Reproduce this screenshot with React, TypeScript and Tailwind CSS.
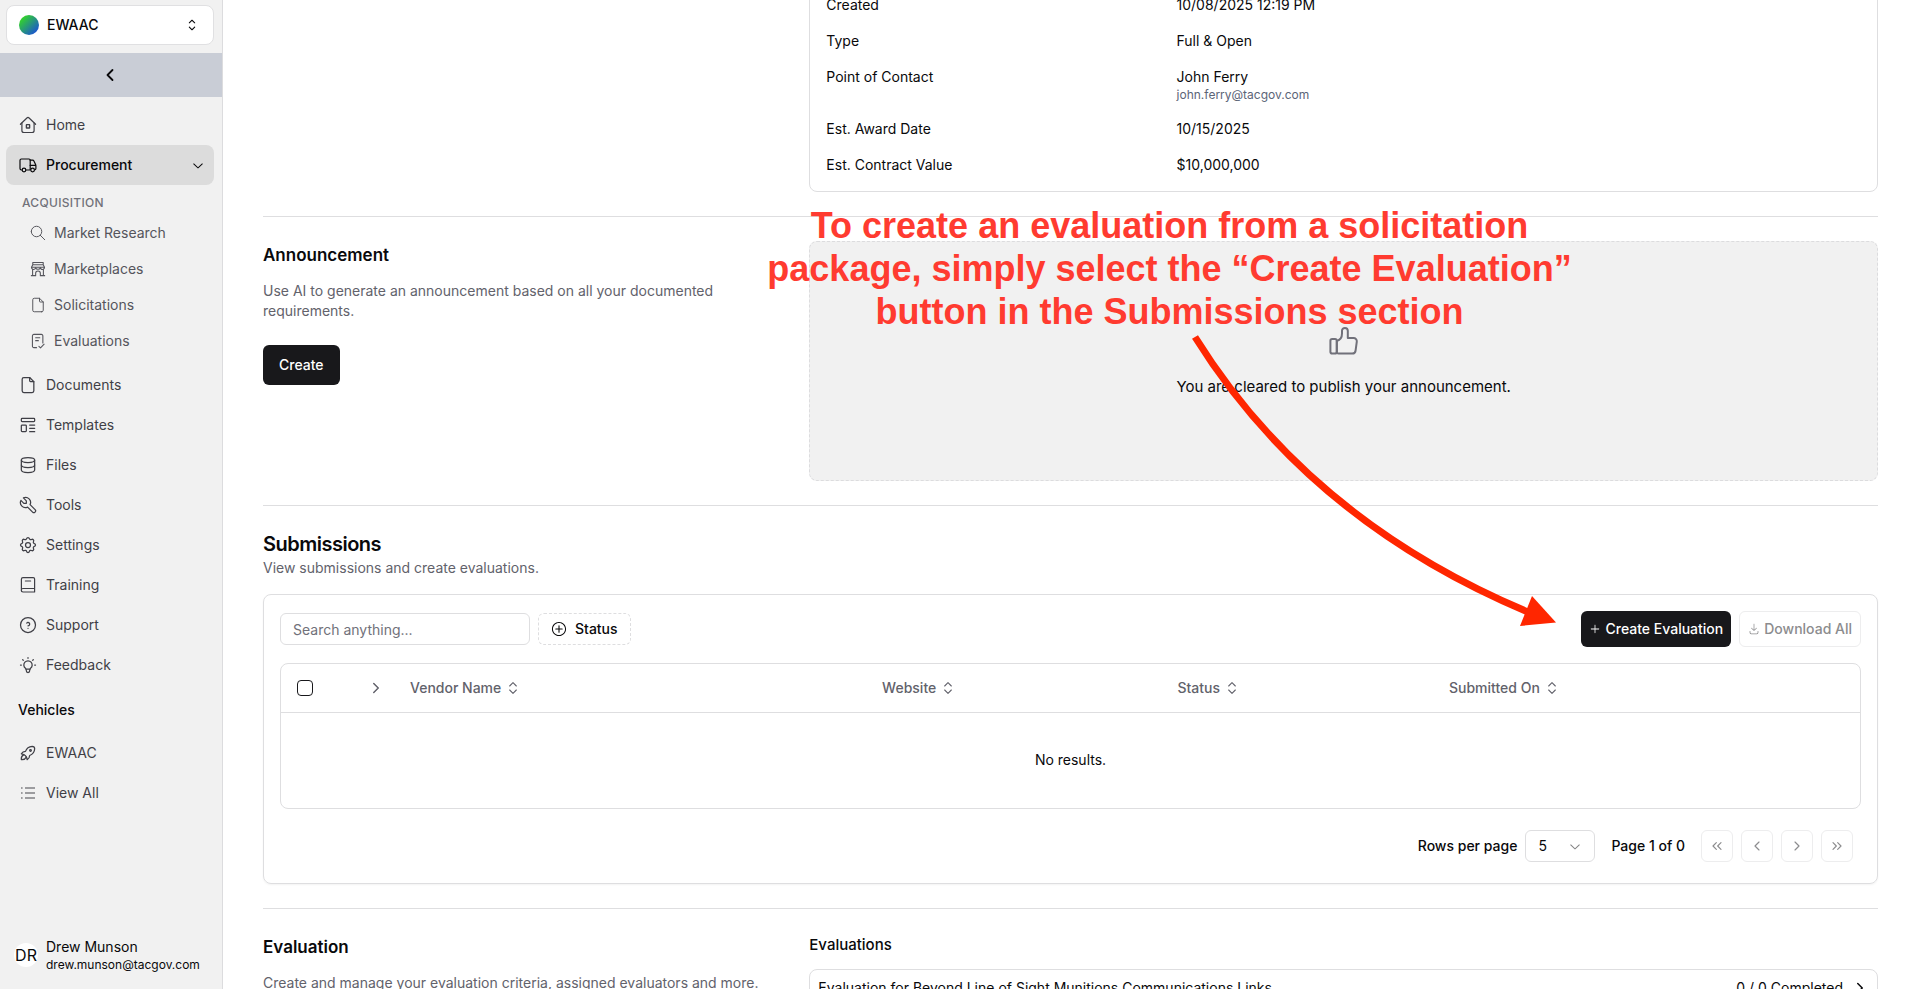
import type { ReactNode } from 'react';
import { ChevronLeft, ChevronRight, ChevronsLeft, ChevronsRight, ChevronsUpDown } from 'lucide-react';
import { RxCaretSort, RxChevronDown, RxDownload, RxPlus, RxPlusCircled } from 'react-icons/rx';
import { TbBulb, TbDatabase, TbFile, TbHelpCircle, TbRocket, TbSearch, TbSettings, TbTemplate, TbTool } from 'react-icons/tb';

const Glyph = ({ size = 20, children }: { size?: number; children: ReactNode }) => (
  <svg width={size} height={size} viewBox="0 0 20 20" fill="none" stroke="currentColor" strokeWidth="1.2" strokeLinecap="round" strokeLinejoin="round" aria-hidden="true">
    {children}
  </svg>
);

const HomeIcon = () => (
  <Glyph>
    <path d="M2.4 9.3 8.9 3a1.6 1.6 0 0 1 2.2 0l6.5 6.3" />
    <path d="M3.9 8.2v7.3a2 2 0 0 0 2 2h8.2a2 2 0 0 0 2-2V8.2" />
    <rect x="8.4" y="9.6" width="3.2" height="3.4" rx="0.3" strokeWidth="1.4" />
  </Glyph>
);

const TruckIcon = () => (
  <Glyph>
    <path d="M3.8 15h-.4A1.4 1.4 0 0 1 2 13.6V5.4A1.4 1.4 0 0 1 3.4 4H11a1.2 1.2 0 0 1 1.2 1.2V15H8" />
    <path d="M12.2 5.2h2.4a1.5 1.5 0 0 1 1.3.8l1.8 3.8a2 2 0 0 1 .2 1v2.8a1.4 1.4 0 0 1-1.2 1.4M12.2 10.4h5.4" />
    <circle cx="6" cy="15" r="1.8" />
    <circle cx="14.6" cy="15" r="1.8" />
  </Glyph>
);

const StoreIcon = () => (
  <Glyph size={18}>
    <path d="M4.2 2.8h11.6v2.4H4.2zM4.2 5.2 2.8 8M15.8 5.2 17.2 8M2.8 8h14.4" />
    <path d="M2.8 8a2.2 2.2 0 0 0 4.6.4 2.7 2.7 0 0 0 5.2 0A2.2 2.2 0 0 0 17.2 8" />
    <path d="M4 10.6v6.6M16 10.6v6.6M2.6 17.4h4.8v-2.6a2.6 2.6 0 0 1 5.2 0v2.6h4.8" />
  </Glyph>
);

const EvaluationIcon = () => (
  <Glyph size={18}>
    <path d="M8.4 17.4H5.4a1.6 1.6 0 0 1-1.6-1.6V4.2a1.6 1.6 0 0 1 1.6-1.6h8.4a1.6 1.6 0 0 1 1.6 1.6v8" />
    <path d="M7.4 6.4h4.6M7.4 9.6h3M11 16l1.8 1.6 4-4" />
  </Glyph>
);

const BookIcon = () => (
  <Glyph>
    <path d="M3.4 15.4V4.2a1.6 1.6 0 0 1 1.6-1.6h10.2a1.4 1.4 0 0 1 1.4 1.4v13H5a1.6 1.6 0 0 1 0-3.5h11.6" />
    <path d="M7.4 6h5.2" />
  </Glyph>
);

const ListIcon = () => (
  <svg width="20" height="20" viewBox="0 0 20 20" fill="none" stroke="#808084" strokeWidth="1.6" aria-hidden="true">
    <path d="M7 5h10M7 10h10M7 15h10M3 5h1.6M3 10h1.6M3 15h1.6" />
  </svg>
);

const ThumbIcon = () => (
  <svg className="size-8 text-[#71717a]" viewBox="0 0 32 32" fill="none" stroke="currentColor" strokeWidth="2" strokeLinejoin="round" aria-hidden="true">
    <rect x="2.4" y="14" width="6.4" height="14.6" rx="1.8" />
    <path d="M8.8 16c4-1 5.2-3.8 5.2-7.4V5.8a2.9 2.9 0 0 1 5.8 0V13h5.8a3.2 3.2 0 0 1 3.2 3.6l-1.2 8.8a3.4 3.4 0 0 1-3.4 3.2H10.5A1.7 1.7 0 0 1 8.8 27z" />
  </svg>
);

const ACQUISITION_LINKS = [
  { label: 'Market Research', icon: <TbSearch size={18} strokeWidth={1.3} /> },
  { label: 'Marketplaces', icon: <StoreIcon /> },
  { label: 'Solicitations', icon: <TbFile size={18} strokeWidth={1.3} /> },
  { label: 'Evaluations', icon: <EvaluationIcon /> },
];

const MAIN_LINKS = [
  { label: 'Documents', icon: <TbFile size={20} strokeWidth={1.5} /> },
  { label: 'Templates', icon: <TbTemplate size={20} strokeWidth={1.5} /> },
  { label: 'Files', icon: <TbDatabase size={20} strokeWidth={1.5} /> },
  { label: 'Tools', icon: <TbTool size={20} strokeWidth={1.5} /> },
  { label: 'Settings', icon: <TbSettings size={20} strokeWidth={1.5} /> },
  { label: 'Training', icon: <BookIcon /> },
  { label: 'Support', icon: <TbHelpCircle size={20} strokeWidth={1.5} /> },
  { label: 'Feedback', icon: <TbBulb size={20} strokeWidth={1.5} /> },
];

const DETAILS = [
  { term: 'Created', value: '10/08/2025 12:19 PM' },
  { term: 'Type', value: 'Full & Open' },
  { term: 'Point of Contact', value: 'John Ferry', email: 'john.ferry@tacgov.com' },
  { term: 'Est. Award Date', value: '10/15/2025' },
  { term: 'Est. Contract Value', value: '$10,000,000' },
];

const PAGE_BUTTONS = [
  { label: 'First page', icon: <ChevronsLeft size={16} strokeWidth={1.75} /> },
  { label: 'Previous page', icon: <ChevronLeft size={16} strokeWidth={1.75} /> },
  { label: 'Next page', icon: <ChevronRight size={16} strokeWidth={1.75} /> },
  { label: 'Last page', icon: <ChevronsRight size={16} strokeWidth={1.75} /> },
];

function NavLink({ label, icon }: { label: string; icon: ReactNode }) {
  return (
    <a href="#" className="flex h-10 items-center gap-2 rounded-lg px-3 text-[#3f3f46]">
      {icon}
      {label}
    </a>
  );
}

function Sidebar() {
  return (
    <aside className="flex w-[223px] shrink-0 flex-col border-r border-[#dcdcde] bg-[#f1f1f1]">
      <div className="pt-[5px] pr-2 pb-2 pl-[6px]">
        <button className="flex h-10 w-full items-center gap-2 rounded-lg border border-[#e0e0e2] bg-white px-3 font-medium">
          <span className="size-5 rounded-full bg-linear-to-br/srgb from-[#34dc1f] from-10% to-[#1a4fd8] to-90%" />
          EWAAC
          <RxCaretSort size={18} className="ml-auto" />
        </button>
      </div>
      <button aria-label="Collapse sidebar" className="flex h-11 items-center justify-center bg-[#c9cdd6] pr-0.5">
        <ChevronLeft size={20} strokeWidth={2.2} />
      </button>

      <nav className="flex flex-col pt-2 pr-2 pl-[6px]">
        <NavLink label="Home" icon={<HomeIcon />} />
        <button className="flex h-10 items-center gap-2 rounded-lg bg-[#dcdcdc] px-3 font-medium">
          <TruckIcon />
          Procurement
          <RxChevronDown size={16} className="ml-auto -mr-1" />
        </button>
        <div className="pt-2 pb-[6px]">
          <h2 className="px-4 pb-0.5 text-xs leading-5 font-medium tracking-wide text-[#71717a] uppercase">Acquisition</h2>
          {ACQUISITION_LINKS.map((link) => (
            <a key={link.label} href="#" className="flex h-9 items-center gap-[7px] pl-[23px] text-[#55555c]">
              {link.icon}
              {link.label}
            </a>
          ))}
        </div>
        {MAIN_LINKS.map((link) => (
          <NavLink key={link.label} label={link.label} icon={link.icon} />
        ))}
        <h2 className="px-3 pt-[15px] pb-[13px] font-medium">Vehicles</h2>
        <NavLink label="EWAAC" icon={<TbRocket size={20} strokeWidth={1.5} />} />
        <NavLink label="View All" icon={<ListIcon />} />
      </nav>

      <div className="mt-auto flex items-center gap-2 px-[14px] pb-4">
        <span className="flex size-6 items-center justify-center rounded-full bg-white text-base">DR</span>
        <div>
          <div className="leading-5">Drew Munson</div>
          <div className="text-xs">drew.munson@tacgov.com</div>
        </div>
      </div>
    </aside>
  );
}

function SortHead({ label }: { label: string }) {
  return (
    <th className="px-4 text-left font-medium">
      <button className="flex items-center gap-1">
        {label}
        <ChevronsUpDown size={16} strokeWidth={1.6} />
      </button>
    </th>
  );
}

function Submissions() {
  return (
    <section>
      <h2 className="text-xl font-semibold tracking-tight">Submissions</h2>
      <p className="text-[#62626b]">View submissions and create evaluations.</p>

      <div className="mt-4 rounded-lg border border-[#dedee0] p-4 shadow-xs">
        <div className="flex items-center gap-2">
          <input aria-label="Search submissions" placeholder="Search anything..." className="h-8 w-[250px] rounded-md border border-[#dedee0] px-3 placeholder:text-[#71717a]" />
          <button className="flex h-8 items-center gap-2 rounded-md border border-dashed border-[#dedee0] px-3 font-medium">
            <RxPlusCircled size={16} />
            Status
          </button>
          <button className="ml-auto flex h-9 items-center gap-1 rounded-md bg-[#18181b] px-2 font-medium text-white">
            <RxPlus size={12} />
            Create Evaluation
          </button>
          <button disabled className="flex h-9 items-center gap-1 rounded-md border border-[#ededee] px-2 font-medium text-[#8c8c8e]">
            <RxDownload size={12} />
            Download All
          </button>
        </div>

        <div className="mt-4 overflow-hidden rounded-lg border border-[#dedee0]">
          <table className="w-full table-fixed">
            <colgroup>
              <col className="w-[72px]" />
              <col className="w-[41px]" />
              <col className="w-[29.9%]" />
              <col className="w-[18.7%]" />
              <col className="w-[17.2%]" />
              <col />
            </colgroup>
            <thead className="border-b border-[#dedee0] text-[#62626b]">
              <tr className="h-12">
                <th className="px-4">
                  <input type="checkbox" aria-label="Select all" className="block size-4 appearance-none rounded-sm border border-[#18181b]" />
                </th>
                <th>
                  <button aria-label="Expand all" className="ml-[14px] block">
                    <ChevronRight size={18} />
                  </button>
                </th>
                <SortHead label="Vendor Name" />
                <SortHead label="Website" />
                <SortHead label="Status" />
                <SortHead label="Submitted On" />
              </tr>
            </thead>
            <tbody>
              <tr>
                <td colSpan={6} className="h-24 text-center">No results.</td>
              </tr>
            </tbody>
          </table>
        </div>

        <div className="mt-4 flex h-[42px] items-center justify-end gap-2 px-2 font-medium">
          <label htmlFor="rows">Rows per page</label>
          <div className="relative">
            <select id="rows" className="block h-8 w-[70px] appearance-none rounded-md border border-[#dedee0] px-3 font-normal">
              <option>5</option>
            </select>
            <RxChevronDown size={16} className="pointer-events-none absolute top-2 right-3 opacity-50" />
          </div>
          <span className="mx-2">Page 1 of 0</span>
          {PAGE_BUTTONS.map((button) => (
            <button key={button.label} disabled aria-label={button.label} className="flex size-8 items-center justify-center rounded-md border border-[#ededee] text-[#8c8c8e]">
              {button.icon}
            </button>
          ))}
        </div>
      </div>
    </section>
  );
}

// Red callout and arrow laid over the page
function Annotation() {
  return (
    <div className="pointer-events-none absolute inset-0">
      <p className="absolute top-[204px] left-[541px] w-[811px] text-center font-['Liberation_Sans',Arial,sans-serif] text-[36px] leading-[43px] font-bold whitespace-nowrap text-[#ff3b30]">
        To create an evaluation from a solicitation
        <br />
        package, simply select the “Create Evaluation”
        <br />
        button in the Submissions section
      </p>
      <svg className="absolute top-[330px] left-[957px] h-[300px] w-[380px]" viewBox="1180 330 380 300" aria-hidden="true">
        <path d="M1195 337Q1309 520 1528 612" fill="none" stroke="#ff2600" strokeWidth="7" />
        <path d="M1556 622.5 1532 596 1520 626Z" fill="#ff2600" />
      </svg>
    </div>
  );
}

export default function App() {
  return (
    <div className="flex h-screen overflow-hidden bg-white font-[Inter,sans-serif] text-sm text-[#09090b]">
      <Sidebar />
      <main className="relative min-w-0 flex-1 overflow-hidden px-10">
        <div className="-mt-[22px] flex flex-col gap-6">
          <section className="grid grid-cols-3 gap-6">
            <dl className="col-span-2 col-start-2 rounded-lg border border-[#dedee0] px-4 py-2">
              {DETAILS.map((row) => (
                <div key={row.term} className="grid grid-cols-3 gap-4 py-2">
                  <dt>{row.term}</dt>
                  <dd className="col-span-2">
                    {row.value}
                    {row.email && <div className="text-xs text-[#5b6477]">{row.email}</div>}
                  </dd>
                </div>
              ))}
            </dl>
          </section>
          <hr className="border-[#dedee0]" />

          <section className="grid grid-cols-3 gap-6">
            <div>
              <h2 className="text-[17px] leading-7 font-semibold">Announcement</h2>
              <p className="mt-3 text-[#62626b]">Use AI to generate an announcement based on all your documented requirements.</p>
              <button className="mt-6 h-10 rounded-md bg-[#18181b] px-4 font-medium text-white">Create</button>
            </div>
            <div className="col-span-2 flex h-60 flex-col items-center justify-center gap-[18px] rounded-lg border border-dashed border-[#dcdcde] bg-[#f1f1f1] pt-0.5">
              <ThumbIcon />
              <p className="text-[15px] leading-6">You are cleared to publish your announcement.</p>
            </div>
          </section>
          <hr className="border-[#dedee0]" />

          <Submissions />
          <hr className="border-[#dedee0]" />

          <section className="grid grid-cols-3 gap-6">
            <div>
              <h2 className="text-[17px] leading-7 font-semibold">Evaluation</h2>
              <p className="mt-3 text-[#62626b]">Create and manage your evaluation criteria, assigned evaluators and more.</p>
            </div>
            <div className="col-span-2">
              <h3 className="text-[15px] leading-6 font-medium">Evaluations</h3>
              <a href="#" className="mt-3 flex items-center gap-2 rounded-lg border border-[#dedee0] p-2">
                Evaluation for Beyond Line of Sight Munitions Communications Links
                <span className="ml-auto">0 / 0 Completed</span>
                <ChevronRight size={18} />
              </a>
            </div>
          </section>
        </div>
        <Annotation />
      </main>
    </div>
  );
}
